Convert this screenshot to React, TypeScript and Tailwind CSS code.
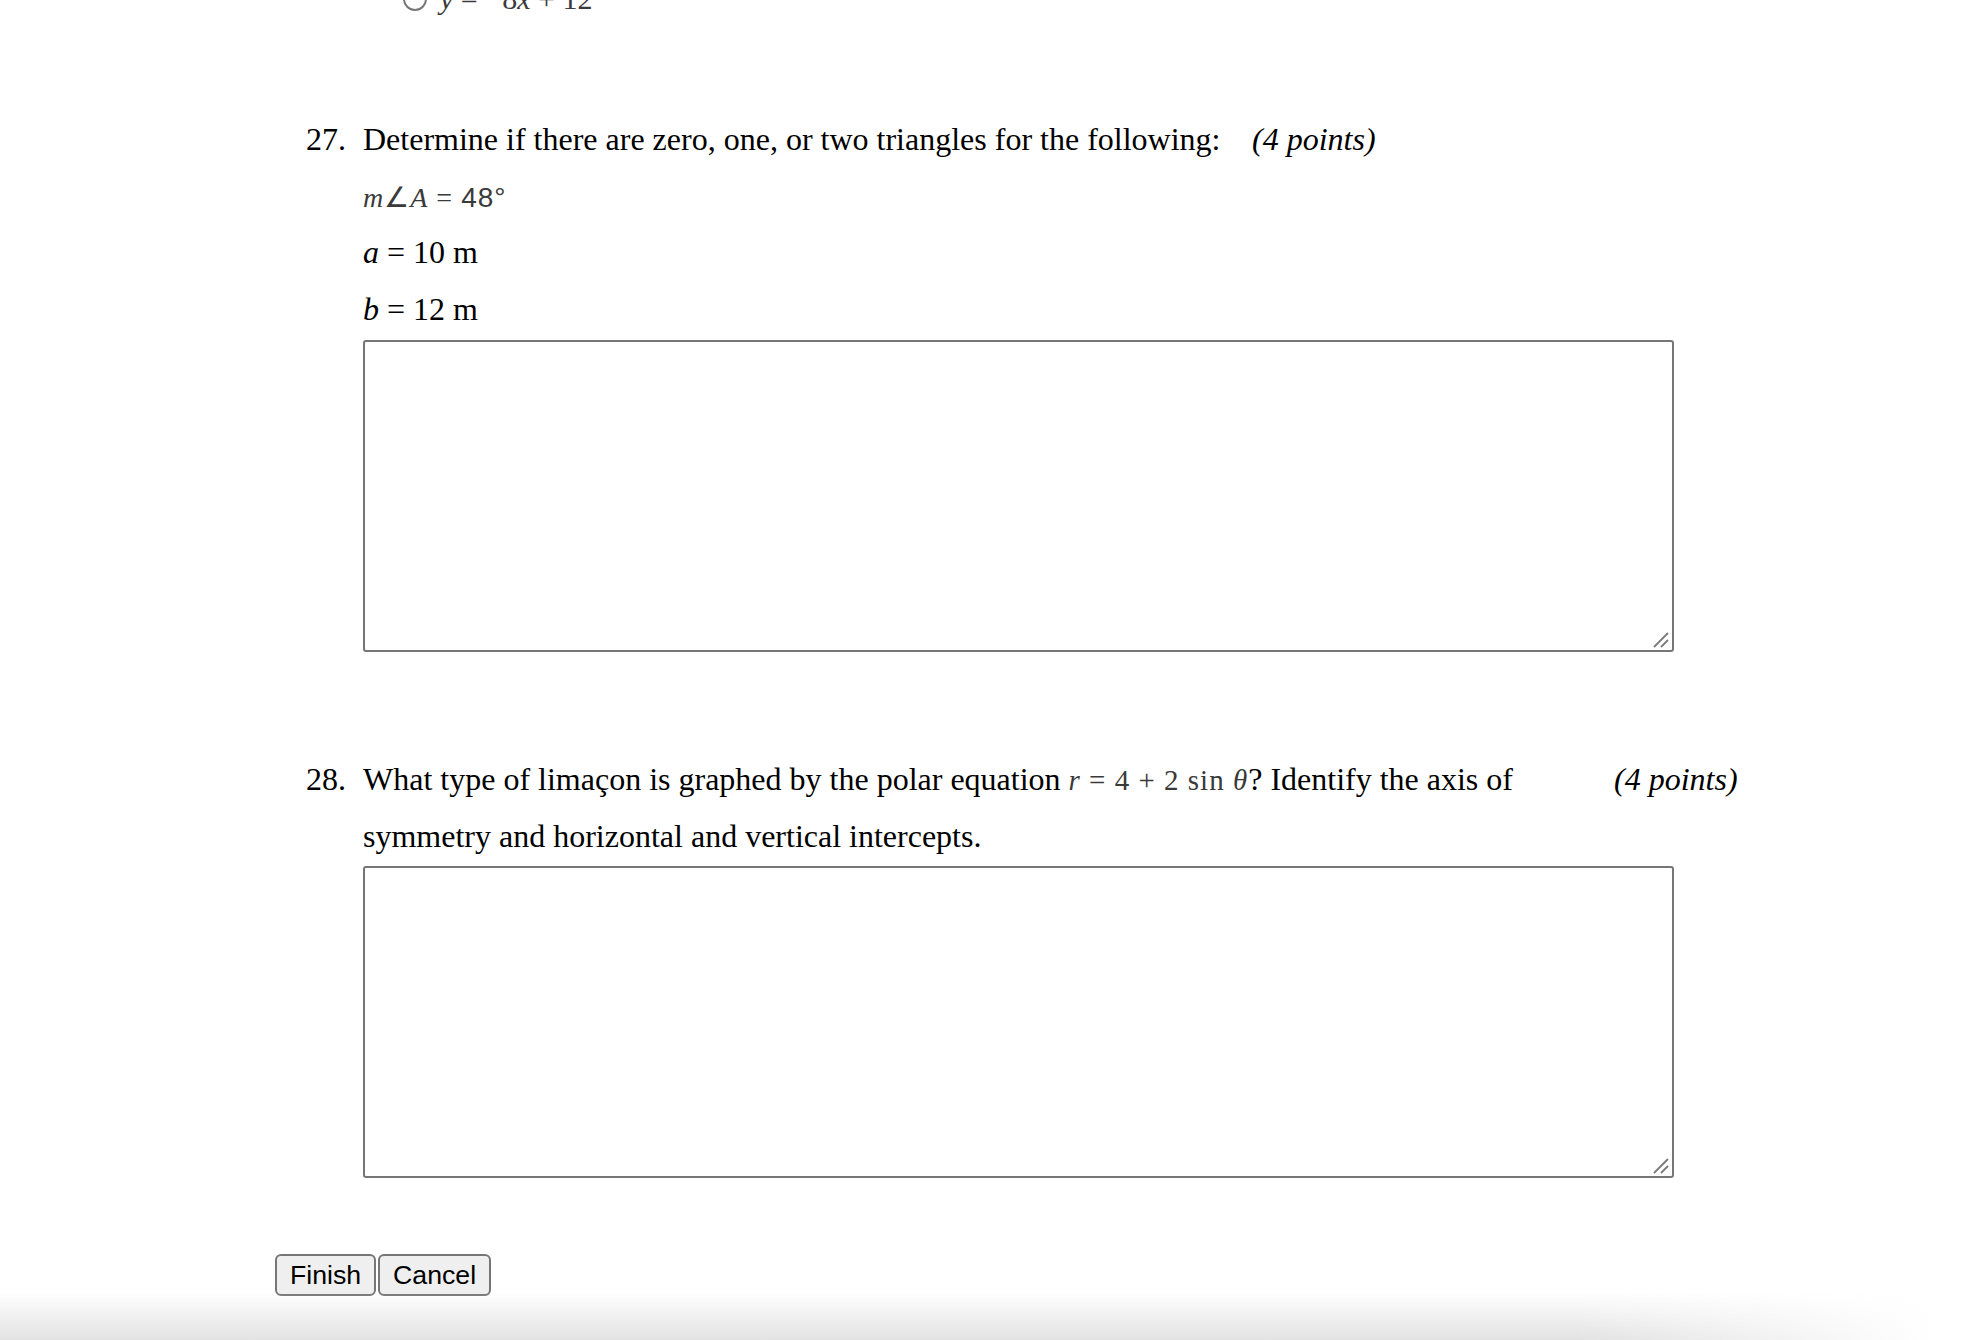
import React from "react";

function ResizeGrip() {
  return (
    <svg
      className="pointer-events-none absolute bottom-[4px] right-[4px]"
      width="18"
      height="18"
      viewBox="0 0 18 18"
    >
      <line x1="2" y1="17" x2="16" y2="3" stroke="#7a7a7a" strokeWidth="1.8" />
      <line x1="9" y1="17" x2="16" y2="10" stroke="#7a7a7a" strokeWidth="1.8" />
    </svg>
  );
}

function AnswerBox() {
  return (
    <div className="relative ml-[57px] h-[312px] w-[1311px]">
      <textarea className="block h-full w-full resize-none rounded-[3px] border-2 border-[#767676] bg-white outline-none" />
      <ResizeGrip />
    </div>
  );
}

const math = "font-['Liberation_Serif',serif] text-[#3a3a3a]";

export default function App() {
  return (
    <div className="relative h-[1340px] w-full overflow-hidden bg-white font-['Liberation_Serif',serif] text-[32px] text-black">
      {/* previous question, cut off at top */}
      <div className="-mt-[16px] ml-[403px] flex h-[30px] items-center">
        <span className="h-[24px] w-[24px] rounded-full border-2 border-[#767676]" />
        <span className={`${math} ml-[13px] text-[30px] leading-[30px]`}>
          <i>y</i> = −8<i>x</i> + 12
        </span>
      </div>

      {/* 27 */}
      <section className="ml-[306px] mt-[105px]">
        <div className="flex">
          <div className="w-[57px] leading-[40px]">27.</div>
          <div className="flex flex-col gap-[17px]">
            <div className="flex leading-[40px]">
              <span className="w-[889px]">
                Determine if there are zero, one, or two triangles for the following:
              </span>
              <i>(4 points)</i>
            </div>
            <div className={`${math} -mb-[3px] mt-[2px] text-[28px] leading-[40px] tracking-[1px]`}>
              <i>m</i>∠<i>A</i> = <span className="font-['Liberation_Sans',sans-serif]">48°</span>
            </div>
            <div className="leading-[40px]">
              <i>a</i> = 10 m
            </div>
            <div className="leading-[40px]">
              <i>b</i> = 12 m
            </div>
          </div>
        </div>
        <div className="mt-[11px]">
          <AnswerBox />
        </div>
      </section>

      {/* 28 */}
      <section className="ml-[306px] mt-[99px]">
        <div className="flex">
          <div className="w-[57px] leading-[56px]">28.</div>
          <p className="w-[1251px] leading-[56px]">
            What type of limaçon is graphed by the polar equation{" "}
            <span className={`${math} text-[29px] tracking-[1px]`}>
              <i>r</i> = 4 + 2 sin <i>θ</i>
            </span>
            ? Identify the axis of symmetry and horizontal and vertical intercepts.
          </p>
          <i className="leading-[56px]">(4 points)</i>
        </div>
        <div className="mt-[2px]">
          <AnswerBox />
        </div>
      </section>

      <div className="ml-[275px] mt-[76px] flex gap-[2px] font-['Liberation_Sans',Arial,sans-serif] text-[26.67px]">
        <button className="h-[42px] rounded-[6px] border-2 border-[#767676] bg-[#efefef] px-[13px] leading-none text-black">
          Finish
        </button>
        <button className="h-[42px] rounded-[6px] border-2 border-[#767676] bg-[#efefef] px-[13px] leading-none text-black">
          Cancel
        </button>
      </div>

      {/* browser bottom shade */}
      <div className="pointer-events-none absolute bottom-0 left-0 right-0 h-[48px] bg-[linear-gradient(to_top,#e2e2e2,rgba(255,255,255,0))] [mask-image:linear-gradient(to_right,#000_80%,transparent_98%)]" />
    </div>
  );
}
